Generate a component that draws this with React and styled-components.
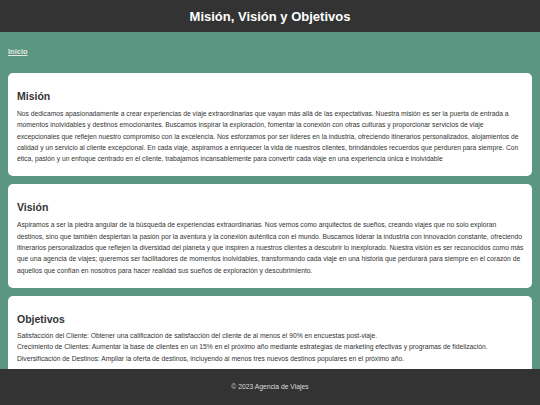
import React from "react";
import styled, { createGlobalStyle } from "styled-components";

const Global = createGlobalStyle`
  html, body { margin: 0; padding: 0; }
  body {
    background: #5a9682;
    font-family: "Liberation Sans", Arial, sans-serif;
    color: #333;
    font-size: 6.74px;
    line-height: 11.3px;
  }
`;

const Header = styled.header`
  background: #333;
  color: #fff;
  height: 32px;
  display: flex;
  align-items: center;
  justify-content: center;
`;

const Title = styled.h1`
  margin: 0;
  font-size: 13px;
  font-weight: bold;
  line-height: 1;
`;

const Nav = styled.nav`
  padding: 14px 8px 0;
  height: 27px;
  box-sizing: border-box;
`;

const NavLink = styled.a`
  color: #e6e6e6;
  font-weight: bold;
  font-size: 7.5px;
  text-decoration: underline;
`;

const Main = styled.main`
  display: flex;
  flex-direction: column;
  gap: 8px;
  padding: 14px 8px 60px;
`;

const Card = styled.section`
  background: #fff;
  border-radius: 5px;
  padding: 10px 8px 10px 9px;
`;

const Heading = styled.h2`
  margin: 7px 0 5px;
  font-size: 10.5px;
  line-height: 13px;
  color: #333;
`;

const Para = styled.p`
  margin: 0 0 2px;
`;

const List = styled.ul`
  list-style: none;
  margin: -1px 0 0;
  padding: 0;
`;

const Item = styled.li``;

const Footer = styled.footer`
  position: fixed;
  left: 0;
  right: 0;
  bottom: 0;
  height: 36px;
  background: #333;
  color: #ddd;
  display: flex;
  align-items: center;
  justify-content: center;
  font-size: 6.75px;
`;

export default function App() {
  return (
    <>
      <Global />
      <Header>
        <Title>Misión, Visión y Objetivos</Title>
      </Header>
      <Nav>
        <NavLink href="#">Inicio</NavLink>
      </Nav>
      <Main>
        <Card>
          <Heading>Misión</Heading>
          <Para>
            Nos dedicamos apasionadamente a crear experiencias de viaje extraordinarias que vayan más allá de las expectativas. Nuestra misión es ser la puerta de entrada a momentos inolvidables y destinos emocionantes. Buscamos inspirar la exploración, fomentar la conexión con otras culturas y proporcionar servicios de viaje excepcionales que reflejen nuestro compromiso con la excelencia. Nos esforzamos por ser líderes en la industria, ofreciendo itinerarios personalizados, alojamientos de calidad y un servicio al cliente excepcional. En cada viaje, aspiramos a enriquecer la vida de nuestros clientes, brindándoles recuerdos que perduren para siempre. Con ética, pasión y un enfoque centrado en el cliente, trabajamos incansablemente para convertir cada viaje en una experiencia única e inolvidable
          </Para>
        </Card>
        <Card>
          <Heading>Visión</Heading>
          <Para>
            Aspiramos a ser la piedra angular de la búsqueda de experiencias extraordinarias. Nos vemos como arquitectos de sueños, creando viajes que no solo exploran destinos, sino que también despiertan la pasión por la aventura y la conexión auténtica con el mundo. Buscamos liderar la industria con innovación constante, ofreciendo itinerarios personalizados que reflejen la diversidad del planeta y que inspiren a nuestros clientes a descubrir lo inexplorado. Nuestra visión es ser reconocidos como más que una agencia de viajes; queremos ser facilitadores de momentos inolvidables, transformando cada viaje en una historia que perdurará para siempre en el corazón de aquellos que confían en nosotros para hacer realidad sus sueños de exploración y descubrimiento.
          </Para>
        </Card>
        <Card>
          <Heading>Objetivos</Heading>
          <List>
            <Item>Satisfacción del Cliente: Obtener una calificación de satisfacción del cliente de al menos el 90% en encuestas post-viaje.</Item>
            <Item>Crecimiento de Clientes: Aumentar la base de clientes en un 15% en el próximo año mediante estrategias de marketing efectivas y programas de fidelización.</Item>
            <Item>Diversificación de Destinos: Ampliar la oferta de destinos, incluyendo al menos tres nuevos destinos populares en el próximo año.</Item>
          </List>
        </Card>
      </Main>
      <Footer>© 2023 Agencia de Viajes</Footer>
    </>
  );
}
